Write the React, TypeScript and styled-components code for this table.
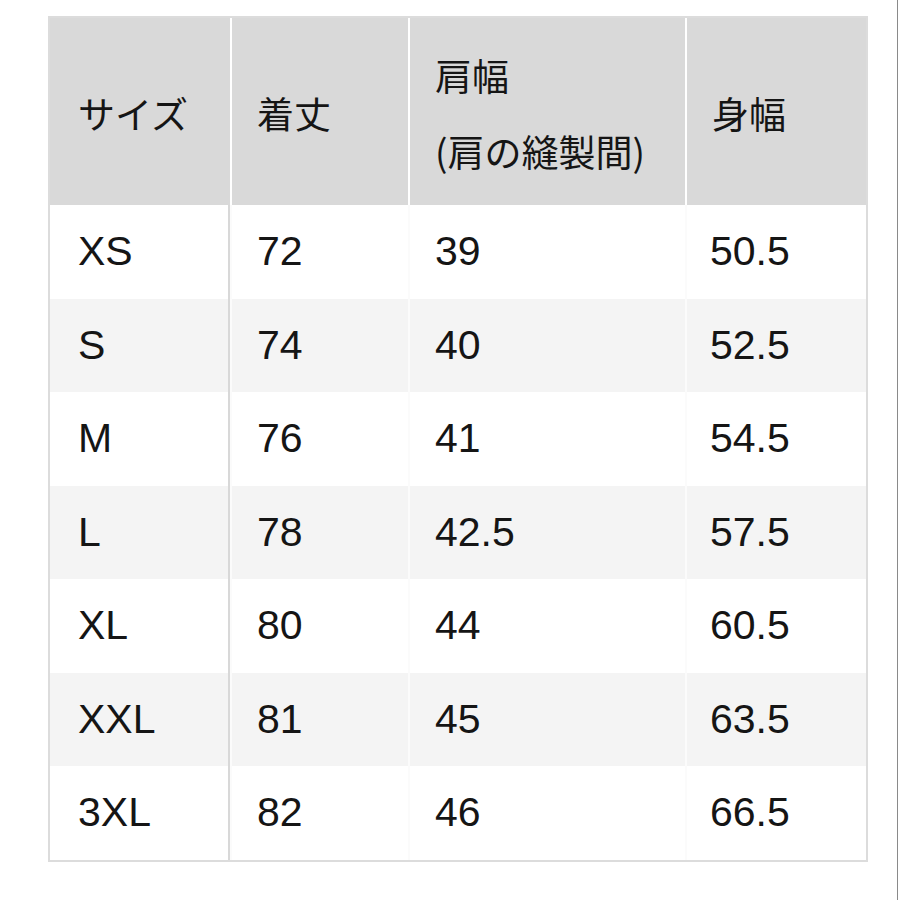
import React from 'react';
import styled, { createGlobalStyle } from 'styled-components';

const GlobalStyle = createGlobalStyle`
  html, body {
    margin: 0;
    padding: 0;
    background: #ffffff;
  }
  body {
    font-family: 'Liberation Sans', 'Noto Sans CJK JP', sans-serif;
    color: #151515;
  }
`;

type Row = {
  size: string;
  length: string;
  shoulder: string;
  width: string;
};

const rows: Row[] = [
  { size: 'XS', length: '72', shoulder: '39', width: '50.5' },
  { size: 'S', length: '74', shoulder: '40', width: '52.5' },
  { size: 'M', length: '76', shoulder: '41', width: '54.5' },
  { size: 'L', length: '78', shoulder: '42.5', width: '57.5' },
  { size: 'XL', length: '80', shoulder: '44', width: '60.5' },
  { size: 'XXL', length: '81', shoulder: '45', width: '63.5' },
  { size: '3XL', length: '82', shoulder: '46', width: '66.5' },
];

const Page = styled.div`
  box-sizing: border-box;
  width: 898px;
  min-height: 900px;
  border-right: 1px solid #8a8a8a;
  padding: 16px 0 0 48px;
`;

const Table = styled.table`
  width: 820px;
  table-layout: fixed;
  border-collapse: separate;
  border-spacing: 0;
  border: 2px solid #dcdcdc;
`;

const HeadCell = styled.th<{ $first?: boolean }>`
  height: 187px;
  box-sizing: border-box;
  padding: 2px 0 0 ${(p) => (p.$first ? 28 : 25)}px;
  background: #d9d9d9;
  border-left: ${(p) => (p.$first ? 'none' : '2px solid #ffffff')};
  text-align: left;
  vertical-align: middle;
  font-family: 'Noto Sans CJK JP', 'Liberation Sans', sans-serif;
  font-weight: 400;
  font-size: 37px;
  line-height: 76px;
  letter-spacing: 0;
`;

const BodyRow = styled.tr<{ $shaded: boolean }>`
  background: ${(p) => (p.$shaded ? '#f4f4f4' : '#ffffff')};
`;

const Cell = styled.td<{ $first?: boolean; $last?: boolean }>`
  height: 93.5px;
  box-sizing: border-box;
  padding: 0 0 0 ${(p) => (p.$first ? 28 : p.$last ? 23 : 25)}px;
  border-right: ${(p) => (p.$first ? '2px solid #d8d8d8' : 'none')};
  border-left: ${(p) => (p.$first ? 'none' : '2px solid #fbfbfb')};
  vertical-align: middle;
  font-size: 41px;
  line-height: 1;
`;

export default function App() {
  return (
    <>
      <GlobalStyle />
      <Page>
        <Table>
          <colgroup>
            <col style={{ width: 180 }} />
            <col style={{ width: 178 }} />
            <col style={{ width: 277 }} />
            <col style={{ width: 181 }} />
          </colgroup>
          <thead>
            <tr>
              <HeadCell $first>サイズ</HeadCell>
              <HeadCell>着丈</HeadCell>
              <HeadCell>
                肩幅
                <br />
                (肩の縫製間)
              </HeadCell>
              <HeadCell>身幅</HeadCell>
            </tr>
          </thead>
          <tbody>
            {rows.map((row, i) => (
              <BodyRow key={row.size} $shaded={i % 2 === 1}>
                <Cell $first>{row.size}</Cell>
                <Cell>{row.length}</Cell>
                <Cell>{row.shoulder}</Cell>
                <Cell $last>{row.width}</Cell>
              </BodyRow>
            ))}
          </tbody>
        </Table>
      </Page>
    </>
  );
}
